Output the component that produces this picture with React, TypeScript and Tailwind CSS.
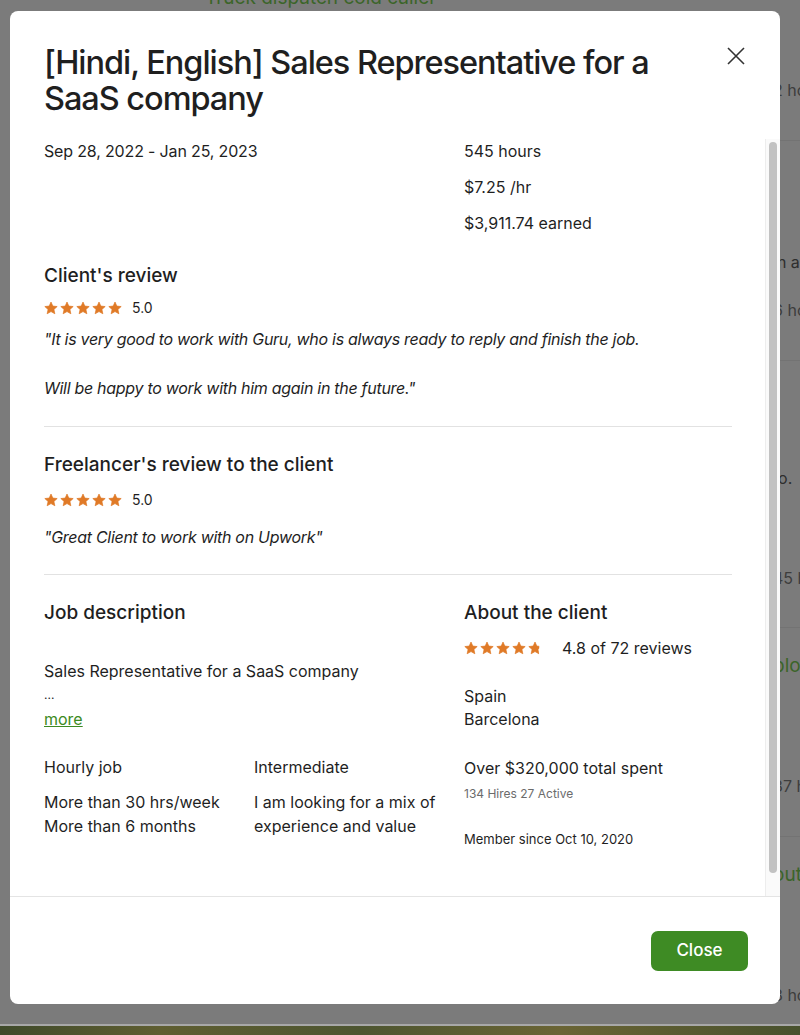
const font = { fontFamily: "Inter, 'Liberation Sans', sans-serif" };

function Star({ fill = 1 }: { fill?: number }) {
  const id = `clip-${Math.round(fill * 100)}`;
  return (
    <svg width="14" height="14" viewBox="0 0 24 24" aria-hidden="true">
      <defs>
        <clipPath id={id}>
          <rect x="0" y="0" width={24 * fill} height="24" />
        </clipPath>
      </defs>
      <path
        clipPath={`url(#${id})`}
        fill="#e07a27"
        stroke="#e07a27"
        strokeWidth="1.2"
        strokeLinejoin="round"
        d="M12 1.8l3.1 6.9 7.5.8-5.6 5 1.6 7.4L12 18.1l-6.6 3.8 1.6-7.4-5.6-5 7.5-.8z"
      />
    </svg>
  );
}

function Stars({ value }: { value: number }) {
  return (
    <div className="flex items-center gap-[2px]">
      {[0, 1, 2, 3, 4].map((i) => (
        <Star key={i} fill={Math.max(0, Math.min(1, value - i))} />
      ))}
    </div>
  );
}

const bgRows = [
  { mt: "mt-[78px]", text: "2 hours", green: false },
  { line: true, mt: "mt-[38px]" },
  { mt: "mt-[109px]", text: "in and", green: false, dark: true },
  { mt: "mt-[24px]", text: "6 hours", green: false },
  { line: true, mt: "mt-[38px]" },
  { mt: "mt-[105px]", text: "to.", green: false, dark: true },
  { mt: "mt-[76px]", text: "45 hours", green: false },
  { line: true, mt: "mt-[37px]" },
  { mt: "mt-[26px]", text: "ploy", green: true },
  { mt: "mt-[96px]", text: "37 hours", green: false },
  { line: true, mt: "mt-[38px]" },
  { mt: "mt-[26px]", text: "outbound", green: true },
  { mt: "mt-[96px]", text: "3 hours", green: false },
];

export default function App() {
  return (
    <div className="relative w-[800px] h-[1035px] overflow-hidden bg-[#7b7b7b]" style={font}>
      {/* dimmed page behind the modal */}
      <div className="flex flex-col">
        <div className="grid grid-cols-[773px_1fr] h-[1024px]">
          <div className="pl-[205px] -mt-[16px] text-[19px] leading-[28px] text-[#3b6529]">
            Truck dispatch cold caller
          </div>
          <div className="flex flex-col">
            {bgRows.map((r, i) =>
              r.line ? (
                <div key={i} className={`${r.mt} h-px bg-[#737373]`} />
              ) : (
                <div
                  key={i}
                  className={`${r.mt} whitespace-nowrap leading-[24px] ${
                    r.green
                      ? "text-[19px] text-[#3b6529]"
                      : r.dark
                        ? "text-[16px] text-[#2e2e2e]"
                        : "text-[16px] text-[#3d3d3d]"
                  }`}
                >
                  {r.text}
                </div>
              )
            )}
          </div>
        </div>
        <div className="h-[2px] bg-[#a8a8a8]" />
        <div className="h-[9px] bg-[linear-gradient(90deg,#3f4a2a,#5f5e31_20%,#4d5530_45%,#6a6434_70%,#48512d)]" />
      </div>

      {/* modal */}
      <div className="absolute left-[10px] top-[11px] w-[770px] h-[993px] bg-white rounded-[8px] flex flex-col text-[#1f1f1f]">
        <div className="flex items-start justify-between pl-[34px] pr-[35px] pt-[34px] pb-[22px]">
          <h2 className="text-[32.5px] leading-[36px] font-medium tracking-[-0.032em] w-[670px]">
            [Hindi, English] Sales Representative for a SaaS company
          </h2>
          <button className="mt-[2px] text-[#333]" aria-label="Close">
            <svg width="18" height="18" viewBox="0 0 18 18" fill="none" stroke="currentColor" strokeWidth="1.6">
              <path d="M1 1l16 16M17 1L1 17" />
            </svg>
          </button>
        </div>

        <div className="flex-1 flex min-h-0">
          <div className="flex-1 overflow-hidden pl-[34px] pr-[33px] text-[16px] leading-[24px]">
            <div className="grid grid-cols-[420px_1fr]">
              <div className="tracking-[-0.01em]">Sep 28, 2022 - Jan 25, 2023</div>
              <div className="flex flex-col gap-[12px]">
                <div>545 hours</div>
                <div>$7.25 /hr</div>
                <div>$3,911.74 earned</div>
              </div>
            </div>

            <div className="mt-[27px] text-[19px] leading-[28px] font-medium">Client's review</div>
            <div className="mt-[8px] flex items-center gap-[10px] h-[20px]">
              <Stars value={5} />
              <span className="text-[14px]">5.0</span>
            </div>
            <p className="mt-[9px] italic whitespace-pre-line leading-[24.5px] tracking-[-0.018em]">
              {`"It is very good to work with Guru, who is always ready to reply and finish the job.\n\nWill be happy to work with him again in the future."`}
            </p>
            <div className="mt-[25px] h-px bg-[#e2e2e2]" />

            <div className="mt-[24px] text-[19px] leading-[28px] font-medium">
              Freelancer's review to the client
            </div>
            <div className="mt-[11px] flex items-center gap-[10px] h-[20px]">
              <Stars value={5} />
              <span className="text-[14px]">5.0</span>
            </div>
            <p className="mt-[15px] italic tracking-[-0.018em]">"Great Client to work with on Upwork"</p>
            <div className="mt-[25px] h-px bg-[#e2e2e2]" />

            <div className="mt-[24px] grid grid-cols-[420px_1fr]">
              <div>
                <div className="text-[19px] leading-[28px] font-medium">Job description</div>
                <div className="mt-[32px]">Sales Representative for a SaaS company</div>
                <div className="text-[12px]">...</div>
                <a href="#" className="block text-[#3c8a22] underline">
                  more
                </a>
                <div className="mt-[24px] grid grid-cols-2">
                  <div>
                    <div>Hourly job</div>
                    <div className="mt-[11px]">More than 30 hrs/week</div>
                    <div>More than 6 months</div>
                  </div>
                  <div>
                    <div>Intermediate</div>
                    <div className="mt-[11px]">
                      I am looking for a mix of
                      <br />
                      experience and value
                    </div>
                  </div>
                </div>
              </div>
              <div>
                <div className="text-[19px] leading-[28px] font-medium">About the client</div>
                <div className="mt-[11px] flex items-center gap-[20px] h-[20px]">
                  <Stars value={4.8} />
                  <span>4.8 of 72 reviews</span>
                </div>
                <div className="mt-[27px] leading-[23.5px]">
                  Spain
                  <br />
                  Barcelona
                </div>
                <div className="mt-[24px]">Over $320,000 total spent</div>
                <div className="mt-[6px] text-[12px] leading-[16px] text-[#6b6b6b]">134 Hires 27 Active</div>
                <div className="mt-[28px] text-[13px] leading-[18px]">Member since Oct 10, 2020</div>
              </div>
            </div>
          </div>
          <div className="w-[15px] border-l border-[#ededed] bg-[#fafafa] flex justify-center">
            <div className="mt-[3px] w-[8px] h-[731px] rounded-full bg-[#c2c2c2]" />
          </div>
        </div>

        <div className="h-[108px] border-t border-[#e4e4e4] flex items-center justify-end pr-[32px]">
          <button className="w-[97px] h-[40px] rounded-[7px] bg-[#3e8b24] text-white text-[17px] font-medium">
            Close
          </button>
        </div>
      </div>
    </div>
  );
}
